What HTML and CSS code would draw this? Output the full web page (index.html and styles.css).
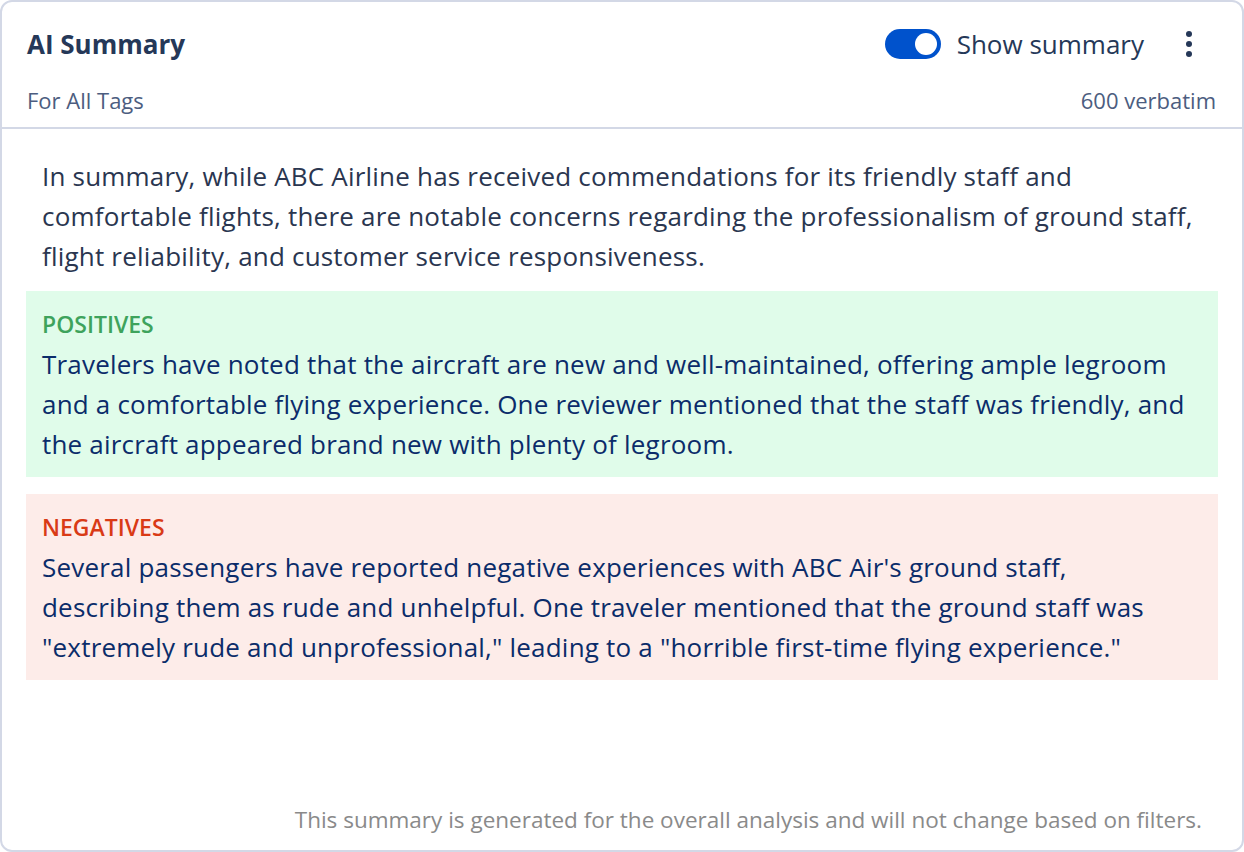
FILE: index.html
```html
<!DOCTYPE html>
<html lang="en">
<head>
<meta charset="utf-8">
<title>AI Summary</title>
<link rel="stylesheet" href="styles.css">
</head>
<body>
<div class="card">
  <div class="card-header">
    <div class="header-row">
      <h2 class="title">AI Summary</h2>
      <div class="actions">
        <span class="toggle"><span class="knob"></span></span>
        <span class="toggle-label">Show summary</span>
        <span class="kebab"><i></i><i></i><i></i></span>
      </div>
    </div>
    <div class="header-row sub">
      <span>For All Tags</span>
      <span>600 verbatim</span>
    </div>
  </div>
  <div class="card-body">
    <p class="summary">In summary, while ABC Airline has received commendations for its friendly staff and comfortable flights, there are notable concerns regarding the professionalism of ground staff, flight reliability, and customer service responsiveness.</p>
    <div class="section positive">
      <div class="section-label">POSITIVES</div>
      <p>Travelers have noted that the aircraft are new and well-maintained, offering ample legroom and a comfortable flying experience. One reviewer mentioned that the staff was friendly, and the aircraft appeared brand new with plenty of legroom.</p>
    </div>
    <div class="section negative">
      <div class="section-label">NEGATIVES</div>
      <p>Several passengers have reported negative experiences with ABC Air's ground staff, describing them as rude and unhelpful. One traveler mentioned that the ground staff was "extremely rude and unprofessional," leading to a "horrible first-time flying experience."</p>
    </div>
  </div>
  <div class="card-footer">This summary is generated for the overall analysis and will not change based on filters.</div>
</div>
</body>
</html>
```
FILE: styles.css
```css
* { box-sizing: border-box; }
html, body { margin: 0; padding: 0; background: #fff; }
body {
  font-family: "Open Sans", "Noto Sans", sans-serif;
  color: #253858;
}
.card {
  width: 1244px;
  height: 852px;
  border: 2px solid #d3d8e6;
  border-radius: 12px;
  display: flex;
  flex-direction: column;
  overflow: hidden;
}
.card-header {
  padding: 24px 26px 13px 25px;
  border-bottom: 2px solid #d3d8e6;
}
.header-row {
  display: flex;
  align-items: center;
  justify-content: space-between;
}
.title {
  margin: 0;
  font-size: 26px;
  line-height: 36px;
  font-weight: 700;
  color: #253858;
}
.actions {
  display: flex;
  align-items: center;
}
.toggle {
  width: 56px;
  height: 30px;
  border-radius: 15px;
  background: #0052cc;
  display: flex;
  align-items: center;
  justify-content: flex-end;
  padding-right: 4px;
}
.knob {
  width: 22px;
  height: 22px;
  border-radius: 50%;
  background: #fff;
}
.toggle-label {
  margin-left: 16px;
  font-size: 26px;
  line-height: 36px;
  color: #253858;
}
.kebab {
  margin-left: 42px;
  margin-right: 24px;
  display: flex;
  flex-direction: column;
  gap: 4px;
}
.kebab i {
  display: block;
  width: 6px;
  height: 6px;
  border-radius: 50%;
  background: #253858;
}
.header-row.sub {
  margin-top: 24px;
  font-size: 22px;
  line-height: 28px;
  color: #4c5d80;
}
.card-body {
  flex: 1;
  padding: 27px 24px 0;
}
.summary {
  margin: 0 0 15px;
  padding: 0 21px 0 16px;
  font-size: 26px;
  letter-spacing: 0.2px;
  line-height: 40px;
  color: #2a3650;
}
.section {
  padding: 17px 21px 13px 16px;
  margin-bottom: 17px;
}
.section p {
  margin: 0;
  font-size: 26px;
  letter-spacing: 0.2px;
  line-height: 40px;
  color: #0b2c6a;
}
.section-label {
  font-size: 23px;
  line-height: 32px;
  font-weight: 600;
  margin-bottom: 4px;
}
.positive { background: #e0fcea; }
.positive .section-label { color: #3ea35c; }
.negative { background: #fdece9; }
.negative .section-label { color: #d93a16; }
.card-footer {
  padding: 0 40px 16px;
  text-align: right;
  font-size: 22.5px;
  line-height: 28px;
  color: #8a8a8a;
}
```
